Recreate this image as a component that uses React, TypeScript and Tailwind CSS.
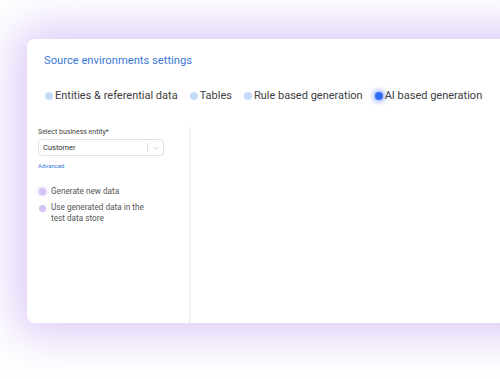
import React from "react";

const tabs = [
  { label: "Entities & referential data", active: false },
  { label: "Tables", active: false },
  { label: "Rule based generation", active: false },
  { label: "AI based generation", active: true },
];

export default function App() {
  return (
    <div
      className="w-[500px] h-[379px] overflow-hidden bg-white relative"
      style={{ fontFamily: "Roboto, 'Liberation Sans', sans-serif" }}
    >
      <div className="absolute left-[27px] top-[39px] w-[520px] h-[284px] bg-white rounded-[8px] shadow-[0_0_45px_12px_rgba(185,150,240,0.5)] flex flex-col">
        <div className="pl-[17px] pt-[14px] text-[11.2px] leading-[16px] text-[#3b79d8]">
          Source environments settings
        </div>
        <div className="flex items-center pl-[18px] mt-[19px] h-[16px] text-[11px] text-[#404040]">
          {tabs.map((t) => (
            <div key={t.label} className="flex items-center mr-[12px]">
              {t.active ? (
                <span className="w-[8px] h-[8px] rounded-full bg-[#2f6bf2] shadow-[0_0_5px_2px_rgba(70,110,250,0.55)]" />
              ) : (
                <span className="w-[8px] h-[8px] rounded-full bg-[#c6dafa]" />
              )}
              <span className="ml-[2px] leading-[16px]">{t.label}</span>
            </div>
          ))}
        </div>
        <div className="flex flex-1 mt-[23px]">
          <div className="w-[162px] pl-[11px] pt-[0px]">
            <div className="text-[7px] leading-[10px] text-[#444]">Select business entity*</div>
            <div className="mt-[2px] w-[126px] h-[17px] border border-[#e2e2e2] rounded-[3px] flex items-center">
              <span className="pl-[4px] text-[7.5px] text-[#333] flex-1">Customer</span>
              <span className="w-px h-[9px] bg-[#e0e0e0]" />
              <span className="w-[15px] flex justify-center">
                <svg width="6" height="4" viewBox="0 0 6 4">
                  <path d="M0.5 0.8 L3 3.2 L5.5 0.8" fill="none" stroke="#bbb" strokeWidth="0.8" />
                </svg>
              </span>
            </div>
            <div className="mt-[5px] text-[6px] leading-[10px] text-[#3b79d8]">Advanced</div>
            <div className="mt-[14px] flex items-center h-[12px]">
              <span className="w-[7px] h-[7px] rounded-full bg-[#d3c3f6] shadow-[0_0_3px_1px_rgba(200,180,245,0.6)] ml-[1px]" />
              <span className="ml-[5px] text-[8.2px] text-[#555]">Generate new data</span>
            </div>
            <div className="mt-[5px] flex items-start">
              <span className="w-[7px] h-[7px] rounded-full bg-[#d3c3f6] mt-[3px] ml-[1px] shrink-0" />
              <span className="ml-[5px] text-[8.2px] leading-[11px] text-[#555] w-[100px]">
                Use generated data in the test data store
              </span>
            </div>
          </div>
          <div className="w-[2px] bg-[#f0f0f0]" />
          <div className="flex-1" />
        </div>
      </div>
    </div>
  );
}
